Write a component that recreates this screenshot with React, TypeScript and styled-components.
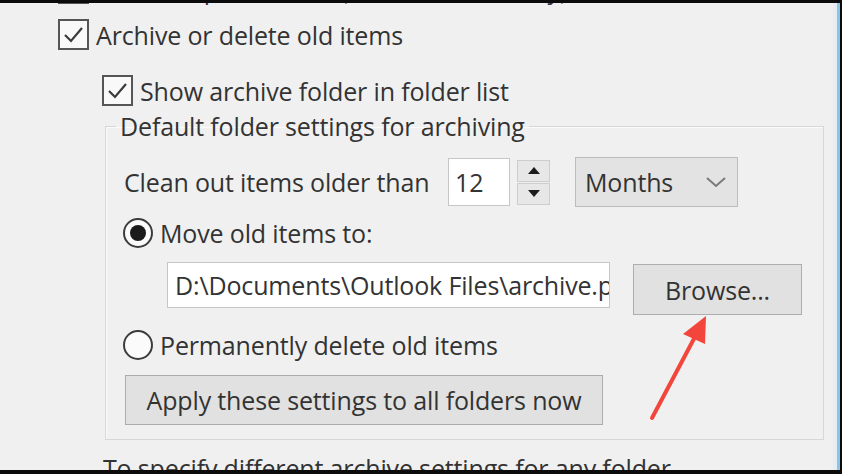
import React from "react";
import styled, { createGlobalStyle } from "styled-components";

const GlobalStyle = createGlobalStyle`
  html, body {
    margin: 0;
    padding: 0;
    background: #0b0b0b;
  }
  body {
    font-family: "Open Sans", "Noto Sans", "DejaVu Sans", sans-serif;
  }
`;

const CheckMark = () => (
  <svg width="31" height="31" viewBox="0 0 31 31">
    <polyline points="7,16 13,22 24,9" fill="none" stroke="#3a3a3a" strokeWidth="2.2" />
  </svg>
);

const Triangle = ({ up }: { up?: boolean }) => (
  <svg width="12" height="7" viewBox="0 0 12 7">
    <polygon points={up ? "0,7 6,0 12,7" : "0,0 12,0 6,7"} fill="#1c1c1c" />
  </svg>
);

const Chevron = () => (
  <svg width="22" height="12" viewBox="0 0 22 12">
    <polyline points="2,2 11,10 20,2" fill="none" stroke="#7a7a7a" strokeWidth="2" />
  </svg>
);

type CheckRowProps = {
  label: string;
  top: number;
  indent?: number;
};

const CheckRow = ({ label, top, indent = 0 }: CheckRowProps) => (
  <Row $top={top} $indent={indent}>
    <CheckBox>
      <CheckMark />
    </CheckBox>
    <Label>{label}</Label>
  </Row>
);

type RadioRowProps = {
  label: string;
  top: number;
  checked?: boolean;
};

const RadioRow = ({ label, top, checked }: RadioRowProps) => (
  <RadioLine $top={top}>
    <RadioCircle>{checked && <RadioDot />}</RadioCircle>
    <Label>{label}</Label>
  </RadioLine>
);

const App = () => {
  return (
    <>
      <GlobalStyle />
      <Screen>
        <Window>
          <CheckRow label="Delete expired items (e-mail folders only)" top={-30} />
          <CheckRow label="Archive or delete old items" top={15} />
          <CheckRow label="Show archive folder in folder list" top={25} indent={44} />

          <GroupBox>
            <Legend>Default folder settings for archiving</Legend>
            <GroupBody>
              <FieldRow>
                <FieldLabel>Clean out items older than</FieldLabel>
                <NumberBox>12</NumberBox>
                <Spinner>
                  <SpinButton>
                    <Triangle up />
                  </SpinButton>
                  <SpinButton>
                    <Triangle />
                  </SpinButton>
                </Spinner>
                <Select>
                  <span>Months</span>
                  <Chevron />
                </Select>
              </FieldRow>

              <RadioRow label="Move old items to:" top={8} checked />

              <PathRow>
                <PathInput>D:\Documents\Outlook Files\archive.pst</PathInput>
                <Button $width={169} $height={51}>Browse...</Button>
              </PathRow>

              <RadioRow label="Permanently delete old items" top={12} />

              <ApplyRow>
                <Button $width={478} $height={50}>Apply these settings to all folders now</Button>
              </ApplyRow>
            </GroupBody>
          </GroupBox>

          <Note>To specify different archive settings for any folder</Note>
        </Window>

        <Arrow width="842" height="474" viewBox="0 0 842 474">
          <line x1="652" y1="418" x2="697" y2="333" stroke="#f2453b" strokeWidth="4" strokeLinecap="round" />
          <polygon points="706,316 683,334 705,344" fill="#f2453b" />
        </Arrow>
      </Screen>
    </>
  );
};

export default App;

const Screen = styled.div`
  position: relative;
  width: 842px;
  height: 474px;
  box-sizing: border-box;
  padding: 3px 2px 4px 0;
  background: #0b0b0b;
  overflow: hidden;
  display: flex;
`;

const Window = styled.div`
  flex: 1;
  min-width: 0;
  display: flex;
  flex-direction: column;
  padding: 0 13px 0 58px;
  background: #f0f0f0;
  border-right: 3px solid #8cc4e8;
  box-shadow: inset -4px 0 0 #e6eef4;
  overflow: hidden;
  color: #333;
  font-size: 25px;
  letter-spacing: -0.15px;
`;

const Row = styled.div<{ $top: number; $indent: number }>`
  flex: 0 0 auto;
  display: flex;
  align-items: center;
  gap: 7px;
  height: 31px;
  margin-top: ${(p) => p.$top}px;
  margin-left: ${(p) => p.$indent}px;
`;

const CheckBox = styled.div`
  flex: 0 0 auto;
  width: 31px;
  height: 31px;
  box-sizing: border-box;
  border: 2px solid #555;
  background: #f9f9f9;
  display: flex;
  align-items: center;
  justify-content: center;

  svg {
    margin: -2px;
  }
`;

const Label = styled.span`
  line-height: 36px;
  white-space: nowrap;
`;

const GroupBox = styled.fieldset`
  flex: 0 0 auto;
  margin: 2px 0 0 47px;
  padding: 0 18px 14px 18px;
  min-width: 0;
  border: 1px solid #d7d7d7;
  box-shadow: inset 1px 1px 0 #fafafa;
`;

const Legend = styled.legend`
  margin-left: -8px;
  padding: 0 4px;
  line-height: 36px;
  white-space: nowrap;
`;

const GroupBody = styled.div`
  display: flex;
  flex-direction: column;
`;

const FieldRow = styled.div`
  display: flex;
  align-items: center;
  height: 50px;
  margin-top: 13px;
`;

const FieldLabel = styled.span`
  flex: 0 0 324px;
  line-height: 36px;
  white-space: nowrap;
`;

const NumberBox = styled.div`
  width: 62px;
  height: 48px;
  box-sizing: border-box;
  padding-left: 6px;
  background: #fff;
  border: 1px solid #c6c6c6;
  display: flex;
  align-items: center;
`;

const Spinner = styled.div`
  display: flex;
  flex-direction: column;
  gap: 1px;
  width: 33px;
  height: 45px;
  margin-left: 7px;
`;

const SpinButton = styled.div`
  flex: 1;
  background: #e7e7e7;
  border: 1px solid #cdcdcd;
  display: flex;
  align-items: center;
  justify-content: center;
`;

const Select = styled.div`
  width: 163px;
  height: 50px;
  box-sizing: border-box;
  margin-left: 25px;
  padding: 0 10px 0 9px;
  background: #e3e3e3;
  border: 1px solid #bcbcbc;
  display: flex;
  align-items: center;
  justify-content: space-between;
`;

const RadioLine = styled.div<{ $top: number }>`
  display: flex;
  align-items: center;
  gap: 7px;
  height: 36px;
  margin: ${(p) => p.$top}px 0 0 -1px;
`;

const RadioCircle = styled.div`
  width: 30px;
  height: 30px;
  box-sizing: border-box;
  border-radius: 50%;
  border: 2px solid #3c3c3c;
  background: #fbfbfb;
  display: flex;
  align-items: center;
  justify-content: center;
`;

const RadioDot = styled.div`
  width: 16px;
  height: 16px;
  border-radius: 50%;
  background: #1a1a1a;
`;

const PathRow = styled.div`
  display: flex;
  align-items: flex-start;
  margin: 11px 0 0 43px;
`;

const PathInput = styled.div`
  width: 443px;
  height: 46px;
  box-sizing: border-box;
  padding-left: 7px;
  background: #fff;
  border: 1px solid #c6c6c6;
  overflow: hidden;
  white-space: nowrap;
  display: flex;
  align-items: center;
`;

const Button = styled.div<{ $width: number; $height: number }>`
  width: ${(p) => p.$width}px;
  height: ${(p) => p.$height}px;
  box-sizing: border-box;
  background: #e1e1e1;
  border: 1px solid #adadad;
  display: flex;
  align-items: center;
  justify-content: center;
  white-space: nowrap;

  ${PathRow} & {
    margin: 2px 0 0 23px;
  }
`;

const ApplyRow = styled.div`
  display: flex;
  margin: 12px 0 0 1px;
`;

const Note = styled.div`
  flex: 0 0 auto;
  margin: 10px 0 0 45px;
  line-height: 36px;
  white-space: nowrap;
`;

const Arrow = styled.svg`
  position: absolute;
  left: 0;
  top: 0;
  pointer-events: none;
`;
